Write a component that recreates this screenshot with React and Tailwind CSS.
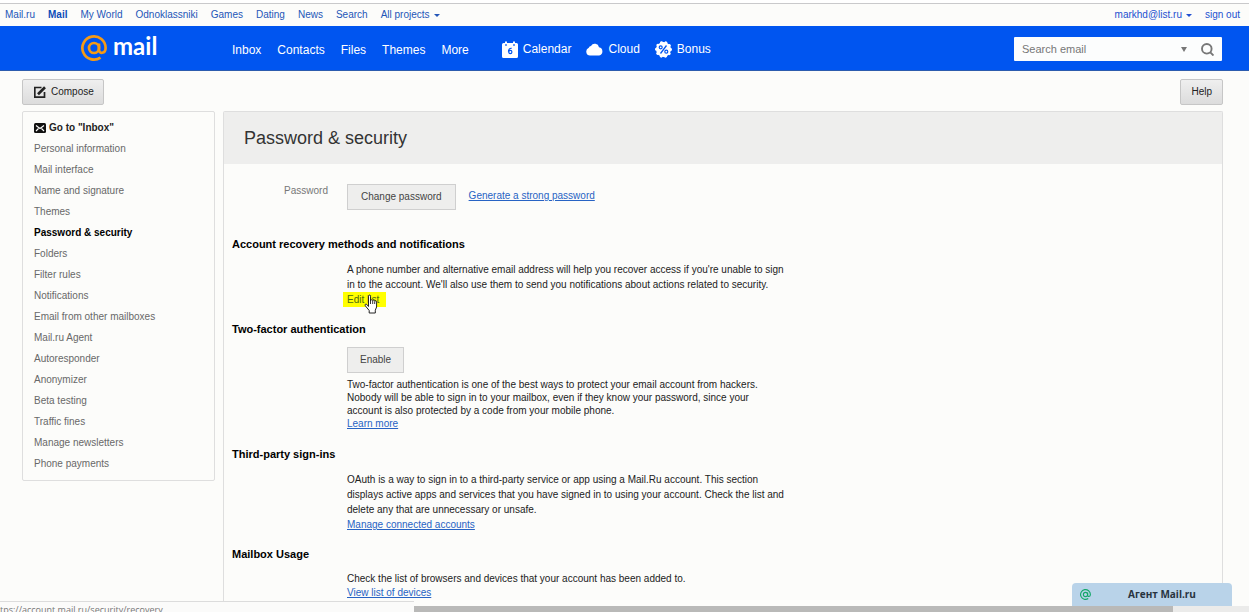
import React from "react";

const sideItems = [
  "Personal information", "Mail interface", "Name and signature", "Themes", "Password & security",
  "Folders", "Filter rules", "Notifications", "Email from other mailboxes", "Mail.ru Agent",
  "Autoresponder", "Anonymizer", "Beta testing", "Traffic fines", "Manage newsletters", "Phone payments",
];
const portalLinks = ["Mail.ru", "Mail", "My World", "Odnoklassniki", "Games", "Dating", "News", "Search"];
const mainLinks = ["Inbox", "Contacts", "Files", "Themes", "More"];

function Caret() {
  return (
    <svg className="ml-1 inline-block h-[3px] w-[6px] align-middle" viewBox="0 0 6 3" aria-hidden="true">
      <path d="M0 0h6L3 3z" fill="currentColor" />
    </svg>
  );
}

function AtMark({ className }) {
  return (
    <svg className={className} viewBox="0 0 26 26" fill="none" stroke="currentColor" strokeWidth="2.7" aria-hidden="true">
      <circle cx="13" cy="13" r="5" />
      <path d="M18 8.5v6.2c0 4.6 6.6 4.2 6.6-1.7A11.6 11.6 0 1 0 19.5 22.6" />
    </svg>
  );
}

function CalendarIcon() {
  return (
    <svg className="h-[17px] w-4" viewBox="0 0 16 17" aria-hidden="true">
      <path d="M1.5 2H3V.5h2V2h6V.5h2V2h1.5A1.5 1.5 0 0 1 16 3.5V15.500A1.500 1.500 0 0 1 14.500 17h-13A1.500 1.500 0 0 1 0 15.500V3.500A1.500 1.500 0 0 1 1.500 2z" fill="#fff" />
      <path d="M3.200 3.300h1.600v1.400H3.200zM11.200 3.300h1.600v1.400h-1.600z" fill="#0055f0" />
      <path d="M9.700 7.300C7.500 7 6.500 8.600 6.500 10.800" stroke="#0055f0" strokeWidth="1.200" fill="none" />
      <circle cx="8.300" cy="11" r="1.600" stroke="#0055f0" strokeWidth="1.200" fill="none" />
    </svg>
  );
}

function CloudIcon() {
  return (
    <svg className="h-[14px] w-[17px]" viewBox="0 0 17 14" aria-hidden="true">
      <path d="M4 13.500a4 4 0 0 1-1.200-7.700A2.600 2.600 0 0 1 5 4a4.300 4.300 0 0 1 8 1.300 4.200 4.200 0 0 1 .2 8.200z" fill="#fff" />
    </svg>
  );
}

function BonusIcon() {
  return (
    <svg className="h-[17px] w-[17px]" viewBox="0 0 17 17" aria-hidden="true">
      <circle cx="8.500" cy="8.500" r="7.400" fill="#fff" />
      <circle cx="8.500" cy="8.500" r="7" fill="none" stroke="#fff" strokeWidth="3" strokeLinecap="round" strokeDasharray="0.01 4.388" />
      <path d="M11.500 4.500l-6 8" stroke="#0055f0" strokeWidth="1.300" />
      <circle cx="5.700" cy="6.300" r="1.500" fill="none" stroke="#0055f0" strokeWidth="1.200" />
      <circle cx="11.300" cy="10.700" r="1.500" fill="none" stroke="#0055f0" strokeWidth="1.200" />
    </svg>
  );
}

function HandCursor() {
  return (
    <svg className="pointer-events-none absolute top-[2px] left-4 h-5 w-4" viewBox="0 0 16 20" aria-hidden="true">
      <path d="M5.500 12.500V2.200c0-1.500 2-1.500 2 0V7l.3-.8c.6-.8 1.700-.5 1.900.5.600-.8 1.700-.6 2 .5.700-.6 1.900-.3 1.900.9V13l-1.300 3.200V19H6.200v-2.500L2.300 11.800c-.9-1.300.6-2.300 1.600-1.300z" fill="#fff" stroke="#222" strokeWidth="1" />
      <path d="M7.500 7v3M9.700 7v3M11.700 7.500V10" stroke="#222" strokeWidth="0.900" />
    </svg>
  );
}

function TextLink({ children }) {
  return <a href="#" className="text-[#2763c4] underline">{children}</a>;
}

function Heading({ children }) {
  return <h2 className="pl-2 text-[11px] leading-4 font-bold text-black">{children}</h2>;
}

export default function App() {
  return (
    <div className="relative flex h-screen flex-col overflow-hidden bg-[#fcfcfa] font-['Liberation_Sans',Arial,sans-serif] text-[10px] text-[#222]">
      <div className="h-1 shrink-0 border-b border-[#c9c9cb] bg-white" />
      <nav aria-label="Portal" className="flex h-[22px] shrink-0 items-center justify-between pr-[9px] pb-px pl-[5px] text-[#2456b8]">
        <div className="flex items-center gap-[13px]">
          {portalLinks.map((t) => (
            <a key={t} href="#" className={t === "Mail" ? "font-bold text-[#0b4db8]" : ""}>{t}</a>
          ))}
          <a href="#">All projects<Caret /></a>
        </div>
        <div className="flex items-center gap-[13px] text-[#2250d0]">
          <a href="#">markhd@list.ru<Caret /></a>
          <a href="#">sign out</a>
        </div>
      </nav>

      <header className="flex h-[45px] shrink-0 items-center border-b border-[#2c5cae] bg-[#0055f0] pr-[27px] pl-[81px] text-xs text-white">
        <a href="#" className="flex w-[151px] items-center gap-[6px]" aria-label="mail">
          <AtMark className="h-[26px] w-[26px] text-[#f59a16]" />
          <span className="pb-1 font-['Lato',sans-serif] text-2xl leading-6 font-bold">mail</span>
        </a>
        <nav aria-label="Main" className="flex items-center gap-4 pt-[3px]">
          {mainLinks.map((t) => <a key={t} href="#">{t}</a>)}
        </nav>
        <nav aria-label="Services" className="ml-[33px] flex items-center gap-[15px] pt-[2px]">
          <a href="#" className="flex items-center gap-[5px]"><CalendarIcon />Calendar</a>
          <a href="#" className="flex items-center gap-[5px]"><CloudIcon />Cloud</a>
          <a href="#" className="flex items-center gap-[5px]"><BonusIcon />Bonus</a>
        </nav>
        <form className="mt-[2px] ml-auto flex h-6 w-52 items-center rounded-[1px] bg-[#fcfdfd] pr-2 pl-2 text-[#777]">
          <input type="search" aria-label="Search email" placeholder="Search email" className="min-w-0 flex-1 bg-transparent text-[11px] outline-none placeholder:text-[#777]" />
          <button type="button" aria-label="Search options" className="px-[14px]">
            <svg className="h-[5px] w-[6px]" viewBox="0 0 6 5"><path d="M0 0h6L3 5z" fill="#777" /></svg>
          </button>
          <button type="submit" aria-label="Search">
            <svg className="h-[13px] w-[13px]" viewBox="0 0 13 13" fill="none" stroke="#777" strokeWidth="1.900"><circle cx="5.800" cy="5.800" r="4.800" /><path d="M9.300 9.300l3.200 3.200" /></svg>
          </button>
        </form>
      </header>

      <div className="flex shrink-0 justify-between pt-2 pr-[26px] pb-[6px] pl-[22px]">
        <button type="button" className="flex h-[26px] items-center gap-[5px] rounded-xs border border-[#c6c6c6] bg-linear-to-b from-[#efefef] to-[#dcdcdc] pr-[9px] pb-px pl-[11px]">
          <svg className="h-3 w-3" viewBox="0 0 12 12" fill="none" stroke="#222" strokeWidth="1.700"><path d="M7.500 1.500H.8v9.700h9.700V6" /><path d="M4 8.200L11 1.300" strokeWidth="2.700" /></svg>
          Compose
        </button>
        <button type="button" className="h-[26px] rounded-xs border border-[#c6c6c6] bg-linear-to-b from-[#efefef] to-[#dcdcdc] px-[10px] pb-px">Help</button>
      </div>

      <div className="flex min-h-0 flex-1 gap-2 pr-[26px] pl-[22px]">
        <aside className="w-[193px] shrink-0 self-start rounded-xs border border-[#dedede] pt-[5px] pb-[6px] pl-[11px]">
          <ul className="leading-[21px] text-[#686868]">
            <li>
              <a href="#" className="flex items-center gap-[3px] font-bold text-[#222]">
                <svg className="h-[10px] w-3" viewBox="0 0 12 10"><rect width="12" height="10" rx="1.500" fill="#111" /><path d="M2 2.500l4 3 4-3M2 8l2.500-2.500M10 8L7.500 5.500" stroke="#fff" strokeWidth="1.100" fill="none" /></svg>
                Go to "Inbox"
              </a>
            </li>
            {sideItems.map((t) => (
              <li key={t}><a href="#" className={t === "Password & security" ? "font-bold text-black" : ""}>{t}</a></li>
            ))}
          </ul>
        </aside>

        <main className="min-w-0 flex-1 rounded-t-xs border border-b-0 border-[#dedede]">
          <h1 className="flex h-[52px] items-center bg-[#eeeeed] pl-5 text-lg text-[#333]">Password &amp; security</h1>
          <div className="flex items-start pt-5">
            <span className="w-[104px] text-right leading-[14px] text-[#777]">Password</span>
            <button type="button" className="ml-[19px] h-[26px] border border-[#cfcfcf] bg-[#eeeeed] px-[13px] pb-px text-[#444]">Change password</button>
            <span className="ml-[13px] leading-6"><TextLink>Generate a strong password</TextLink></span>
          </div>

          <section className="pt-[26px]">
            <Heading>Account recovery methods and notifications</Heading>
            <div className="pt-[10px] pl-[123px] leading-[15px]">
              <p>A phone number and alternative email address will help you recover access if you're unable to sign<br />in to the account. We'll also use them to send you notifications about actions related to security.</p>
              <span className="relative block w-fit">
                <a href="#" className="-ml-1 block bg-[#ff0] pr-[7px] pl-1 text-[#4b6b12]">Edit list</a>
                <HandCursor />
              </span>
            </div>
          </section>

          <section className="pt-[14px]">
            <Heading>Two-factor authentication</Heading>
            <div className="pt-[10px] pl-[123px] leading-[13px]">
              <button type="button" className="mb-[5px] block h-[26px] border border-[#cfcfcf] bg-[#eeeeed] px-3 pb-px text-[#444]">Enable</button>
              <p>Two-factor authentication is one of the best ways to protect your email account from hackers.<br />Nobody will be able to sign in to your mailbox, even if they know your password, since your<br />account is also protected by a code from your mobile phone.</p>
              <TextLink>Learn more</TextLink>
            </div>
          </section>

          <section className="pt-4">
            <Heading>Third-party sign-ins</Heading>
            <div className="pt-[10px] pl-[123px] leading-[15px]">
              <p>OAuth is a way to sign in to a third-party service or app using a Mail.Ru account. This section<br />displays active apps and services that you have signed in to using your account. Check the list and<br />delete any that are unnecessary or unsafe.</p>
              <TextLink>Manage connected accounts</TextLink>
            </div>
          </section>

          <section className="pt-[14px]">
            <Heading>Mailbox Usage</Heading>
            <div className="pt-[10px] pl-[123px] leading-[14px]">
              <p>Check the list of browsers and devices that your account has been added to.</p>
              <TextLink>View list of devices</TextLink>
            </div>
          </section>
        </main>
      </div>

      <button type="button" className="absolute right-[17px] bottom-[6px] flex h-[23px] w-40 items-center rounded-t-sm bg-[#b9d3e9] pr-3 pb-px pl-2 text-[#28343f]">
        <AtMark className="h-[11px] w-[11px] text-[#15a86a]" />
        <span className="flex-1 pl-[13px] font-['Open_Sans',sans-serif] text-[10px] font-bold">Агент Mail.ru</span>
      </button>
      <div className="absolute inset-x-0 bottom-0 flex h-[11px] items-end">
        <div className="h-full w-[414px] overflow-hidden border-t border-[#dcdcdc] bg-[#fbfbfa] font-['Open_Sans',sans-serif] text-[9px] leading-4 text-[#777]">tps://account.mail.ru/security/recovery</div>
        <div className="h-[6px] w-[759px] bg-[#b9b9b8]" />
        <div className="h-[6px] flex-1 bg-[#ebebea]" />
      </div>
    </div>
  );
}
